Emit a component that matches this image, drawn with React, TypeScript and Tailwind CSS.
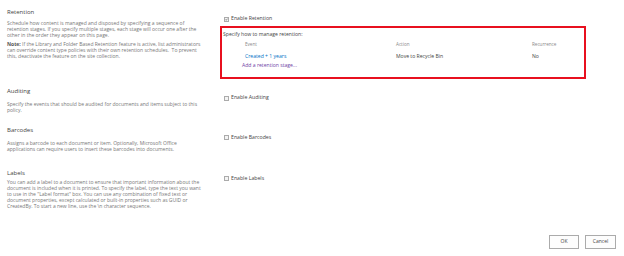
const font = { fontFamily: '"Open Sans", "Noto Sans", sans-serif' };

function Box({ checked }: { checked?: boolean }) {
  return (
    <span className="inline-flex h-[5px] w-[5px] items-center justify-center border border-[#ababab] bg-[#f4f4f4]">
      {checked && (
        <svg viewBox="0 0 5 5" className="h-[5px] w-[5px]">
          <path d="M0.8 2.6 L2 3.8 L4.2 1.1" fill="none" stroke="#333" strokeWidth="0.9" />
        </svg>
      )}
    </span>
  );
}

function Check({ label, checked }: { label: string; checked?: boolean }) {
  return (
    <div className="flex h-[8px] items-center gap-[2px] pl-[4px] text-[5.2px] text-[#444]">
      <Box checked={checked} />
      <span>{label}</span>
    </div>
  );
}

function Title({ children }: { children: React.ReactNode }) {
  return <div className="h-[8px] text-[6px] leading-[8px] text-[#444]">{children}</div>;
}

function Desc({ children, className = '' }: { children: React.ReactNode; className?: string }) {
  return <p className={`text-[5px] leading-[6px] text-[#777] ${className}`}>{children}</p>;
}

export default function App() {
  return (
    <div className="relative h-[256px] w-[624px] overflow-hidden bg-white" style={font}>
      <div className="flex pt-[8px]">
        <div className="w-[213px] pl-[7px] pr-[8px]">
          <Title>Retention</Title>
          <Desc className="mt-[4px]">
            Schedule how content is managed and disposed by specifying a sequence of retention stages. If you specify multiple stages, each stage will occur one after the other in the order they appear on this page.
          </Desc>
          <Desc className="mt-[3px]">
            <b className="text-[#555]">Note:</b> If the Library and Folder Based Retention feature is active, list administrators can override content type policies with their own retention schedules.&nbsp; To prevent this, deactivate the feature on the site collection.
          </Desc>
        </div>
        <div className="pl-[7px] pt-[7px]">
          <Check label="Enable Retention" checked />
          <div className="mt-[3px] h-[53px] w-[366px] border-2 border-[#e8101f] pl-[1px] pt-[3px] text-[5.1px] text-[#444]">
            <div className="leading-[6px]">Specify how to manage retention:</div>
            <div className="mt-[4px] flex leading-[6px] text-[4.6px] text-[#888]">
              <span className="ml-[22px] w-[151px]">Event</span>
              <span className="w-[136px]">Action</span>
              <span>Recurrence</span>
            </div>
            <div className="mt-[5.5px] flex leading-[7px]">
              <span className="ml-[22px] w-[151px] text-[#0072c6]">Created + 1 years</span>
              <span className="w-[136px]">Move to Recycle Bin</span>
              <span>No</span>
            </div>
            <div className="ml-[19px] mt-[2.5px] leading-[6px] text-[#6f42a6]">Add a retention stage...</div>
          </div>
        </div>
      </div>

      <div className="mt-[8px] flex">
        <div className="w-[213px] pl-[7px] pr-[8px]">
          <Title>Auditing</Title>
          <Desc className="mt-[5.5px]">
            Specify the events that should be audited for documents and items subject to this policy.
          </Desc>
        </div>
        <div className="pl-[7px] pt-[7px]">
          <Check label="Enable Auditing" />
        </div>
      </div>

      <div className="mt-[13px] flex">
        <div className="w-[213px] pl-[7px] pr-[8px]">
          <Title>Barcodes</Title>
          <Desc className="mt-[6px]">
            Assigns a barcode to each document or item. Optionally, Microsoft Office applications can require users to insert these barcodes into documents.
          </Desc>
        </div>
        <div className="pl-[7px] pt-[8px]">
          <Check label="Enable Barcodes" />
        </div>
      </div>

      <div className="mt-[17px] flex">
        <div className="w-[213px] pl-[7px] pr-[8px]">
          <Title>Labels</Title>
          <Desc className="mt-[2px]">
            You can add a label to a document to ensure that important information about the document is included when it is printed. To specify the label, type the text you want to use in the "Label format" box. You can use any combination of fixed text or document properties, except calculated or built-in properties such as GUID or CreatedBy. To start a new line, use the \n character sequence.
          </Desc>
        </div>
        <div className="pl-[7px] pt-[6px]">
          <Check label="Enable Labels" />
        </div>
      </div>

      <div className="absolute right-[8px] top-[235px] flex gap-[6px] text-[5px] text-[#444]">
        <button className="h-[14px] w-[30px] border border-[#ababab] bg-[#fdfdfd]">OK</button>
        <button className="h-[14px] w-[31px] border border-[#ababab] bg-[#fdfdfd]">Cancel</button>
      </div>
    </div>
  );
}
